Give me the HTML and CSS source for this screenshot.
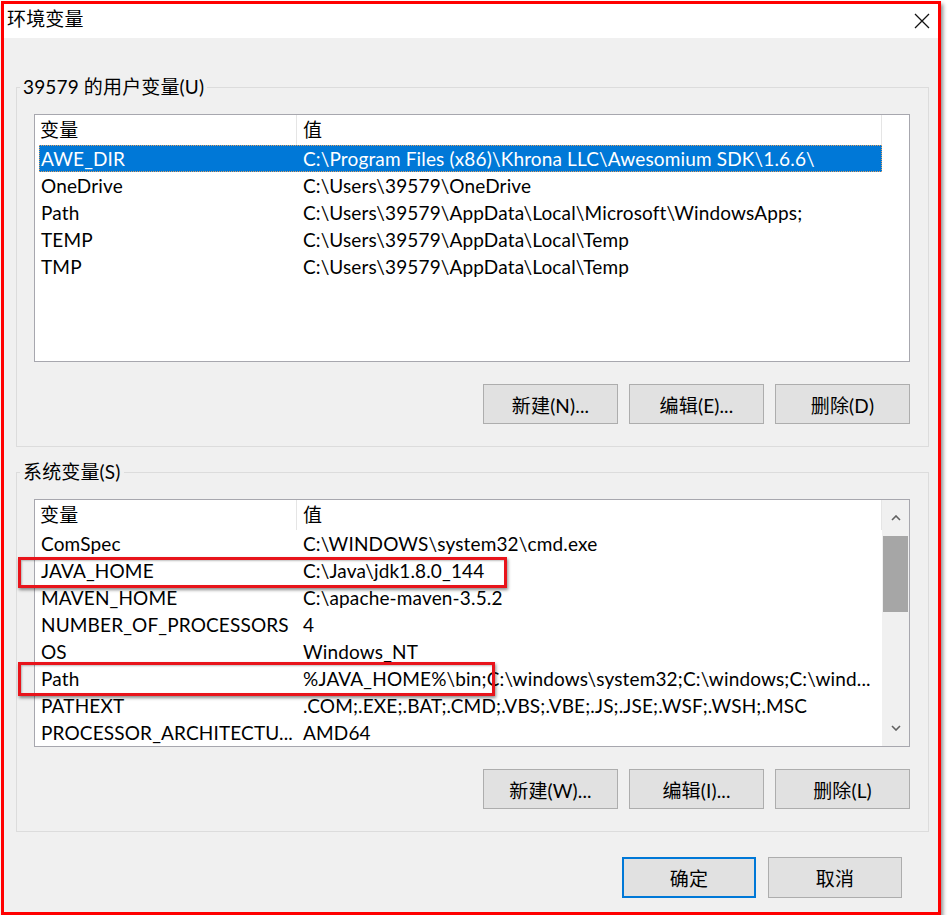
FILE: index.html
```html
<!DOCTYPE html>
<html lang="zh-CN">
<head>
<meta charset="utf-8">
<title>环境变量</title>
<link rel="stylesheet" href="styles.css">
</head>
<body>
<div class="dialog">
  <div class="titlebar">
    <span class="title">环境变量</span>
    <svg class="close" width="16" height="16" viewBox="0 0 16 16"><path d="M1 1L15 15M15 1L1 15" stroke="#111" stroke-width="1.3" fill="none"/></svg>
  </div>
  <div class="content">
    <fieldset class="group">
      <legend>39579 的用户变量(U)</legend>
      <div class="list">
        <div class="list-head">
          <div class="hcell c1">变量</div>
          <div class="hcell c2">值</div>
        </div>
        <div class="rows">
          <div class="row selected"><span class="cell c1">AWE_DIR</span><span class="cell c2">C:\Program Files (x86)\Khrona LLC\Awesomium SDK\1.6.6\</span></div>
          <div class="row"><span class="cell c1">OneDrive</span><span class="cell c2">C:\Users\39579\OneDrive</span></div>
          <div class="row"><span class="cell c1">Path</span><span class="cell c2">C:\Users\39579\AppData\Local\Microsoft\WindowsApps;</span></div>
          <div class="row"><span class="cell c1">TEMP</span><span class="cell c2">C:\Users\39579\AppData\Local\Temp</span></div>
          <div class="row"><span class="cell c1">TMP</span><span class="cell c2">C:\Users\39579\AppData\Local\Temp</span></div>
        </div>
      </div>
      <div class="btns">
        <button class="btn">新建(N)...</button>
        <button class="btn">编辑(E)...</button>
        <button class="btn">删除(D)</button>
      </div>
    </fieldset>

    <fieldset class="group group-sys">
      <legend>系统变量(S)</legend>
      <div class="list list-scroll">
        <div class="list-main">
          <div class="list-head">
            <div class="hcell c1">变量</div>
            <div class="hcell c2">值</div>
          </div>
          <div class="rows">
            <div class="row"><span class="cell c1">ComSpec</span><span class="cell c2">C:\WINDOWS\system32\cmd.exe</span></div>
            <div class="row"><span class="cell c1">JAVA_HOME</span><span class="cell c2">C:\Java\jdk1.8.0_144</span></div>
            <div class="row"><span class="cell c1">MAVEN_HOME</span><span class="cell c2">C:\apache-maven-3.5.2</span></div>
            <div class="row"><span class="cell c1">NUMBER_OF_PROCESSORS</span><span class="cell c2">4</span></div>
            <div class="row"><span class="cell c1">OS</span><span class="cell c2">Windows_NT</span></div>
            <div class="row"><span class="cell c1">Path</span><span class="cell c2">%JAVA_HOME%\bin;C:\windows\system32;C:\windows;C:\wind...</span></div>
            <div class="row"><span class="cell c1">PATHEXT</span><span class="cell c2">.COM;.EXE;.BAT;.CMD;.VBS;.VBE;.JS;.JSE;.WSF;.WSH;.MSC</span></div>
            <div class="row"><span class="cell c1">PROCESSOR_ARCHITECTU...</span><span class="cell c2">AMD64</span></div>
          </div>
        </div>
        <div class="scrollbar">
          <div class="arrow">
            <svg width="10" height="6" viewBox="0 0 10 6"><path d="M1 5L5 1L9 5" stroke="#606060" stroke-width="1.6" fill="none"/></svg>
          </div>
          <div class="thumb"></div>
          <div class="track"></div>
          <div class="arrow">
            <svg width="10" height="6" viewBox="0 0 10 6"><path d="M1 1L5 5L9 1" stroke="#606060" stroke-width="1.6" fill="none"/></svg>
          </div>
        </div>
        <div class="mark mark-java"></div>
        <div class="mark mark-path"></div>
      </div>
      <div class="btns">
        <button class="btn">新建(W)...</button>
        <button class="btn">编辑(I)...</button>
        <button class="btn">删除(L)</button>
      </div>
    </fieldset>

    <div class="footer">
      <button class="btn btn-main btn-default">确定</button>
      <button class="btn btn-main">取消</button>
    </div>
  </div>
</div>
</body>
</html>
```

FILE: styles.css
```css
* { box-sizing: border-box; }

html, body {
  margin: 0;
  padding: 0;
  background: #ffffff;
}

body {
  font-family: "Lato", "Noto Sans CJK SC", sans-serif;
  font-size: 19px;
  letter-spacing: 0.15px;
  color: #000;
}

.dialog {
  margin: 1px 0 0 1px;
  width: 940px;
  height: 914px;
  border: 3px solid #ff0000;
  background: #f0f0f0;
  box-shadow: 2px 3px 4px rgba(0, 0, 0, 0.45);
  display: flex;
  flex-direction: column;
}

.titlebar {
  height: 34px;
  background: #ffffff;
  display: flex;
  align-items: center;
  justify-content: space-between;
  padding: 0 8px 4px 3px;
  flex: none;
}

.title {
  line-height: 24px;
}

.close {
  margin-top: 4px;
}

.content {
  flex: 1;
  padding: 0 8px 0 12px;
  display: flex;
  flex-direction: column;
}

.group {
  margin: 37px 0 0 0;
  padding: 15px 18px 22px 17px;
  border: 1px solid #dcdcdc;
  width: 913px;
  min-width: 0;
}

.group-sys {
  margin-top: 13px;
}

.group legend {
  padding: 0 3px;
  margin-left: -14px;
  line-height: 24px;
}

.list {
  height: 248px;
  border: 1px solid #a7a7ae;
  background: #ffffff;
  overflow: hidden;
  position: relative;
}

.list-scroll {
  display: flex;
  overflow: visible;
}

.list-main {
  width: 847px;
  overflow: hidden;
}

.list-head {
  display: flex;
  height: 30px;
  line-height: 30px;
}

.hcell {
  border-right: 1px solid #e5e5e5;
  white-space: nowrap;
}

.hcell.c1 {
  width: 262px;
  padding-left: 5px;
}

.hcell.c2 {
  width: 585px;
  padding-left: 6px;
}

.rows {
  padding-left: 4px;
}

.row {
  display: flex;
  width: 843px;
  height: 27px;
  line-height: 27px;
  white-space: nowrap;
}

.row .c1 {
  width: 258px;
  padding-left: 2px;
  overflow: hidden;
}

.row .c2 {
  flex: 1;
  padding-left: 6px;
  overflow: hidden;
}

.row.selected {
  background: #0078d7;
  color: #ffffff;
  outline: 1px dotted #e0a060;
  outline-offset: -1px;
}

.scrollbar {
  width: 27px;
  background: #f0f0f0;
  display: flex;
  flex-direction: column;
  padding: 0 1px 0 1px;
}

.arrow {
  height: 36px;
  display: flex;
  align-items: center;
  justify-content: center;
  flex: none;
}

.thumb {
  height: 76px;
  background: #a6a6a6;
  flex: none;
}

.track {
  flex: 1;
}

.mark {
  position: absolute;
  left: -17px;
  border: 3px solid #e8141b;
  box-shadow: 1px 2px 3px rgba(0, 0, 0, 0.45), inset 1px 1px 2px rgba(0, 0, 0, 0.25);
  pointer-events: none;
}

.mark-java {
  top: 57px;
  width: 489px;
  height: 31px;
}

.mark-path {
  top: 162px;
  width: 477px;
  height: 34px;
}

.btns {
  display: flex;
  justify-content: flex-end;
  gap: 11px;
  margin-top: 22px;
}

.btn {
  width: 135px;
  height: 40px;
  background: #e1e1e1;
  border: 1px solid #adadad;
  font-family: "Lato", "Noto Sans CJK SC", sans-serif;
  font-size: 19px;
  letter-spacing: 0.15px;
  color: #000;
  padding: 0;
  border-radius: 0;
}

.footer {
  display: flex;
  justify-content: flex-end;
  gap: 12px;
  margin-top: 25px;
  padding-right: 28px;
}

.btn-main {
  width: 134px;
  height: 41px;
}

.btn-default {
  border: 2px solid #0078d7;
}
```
